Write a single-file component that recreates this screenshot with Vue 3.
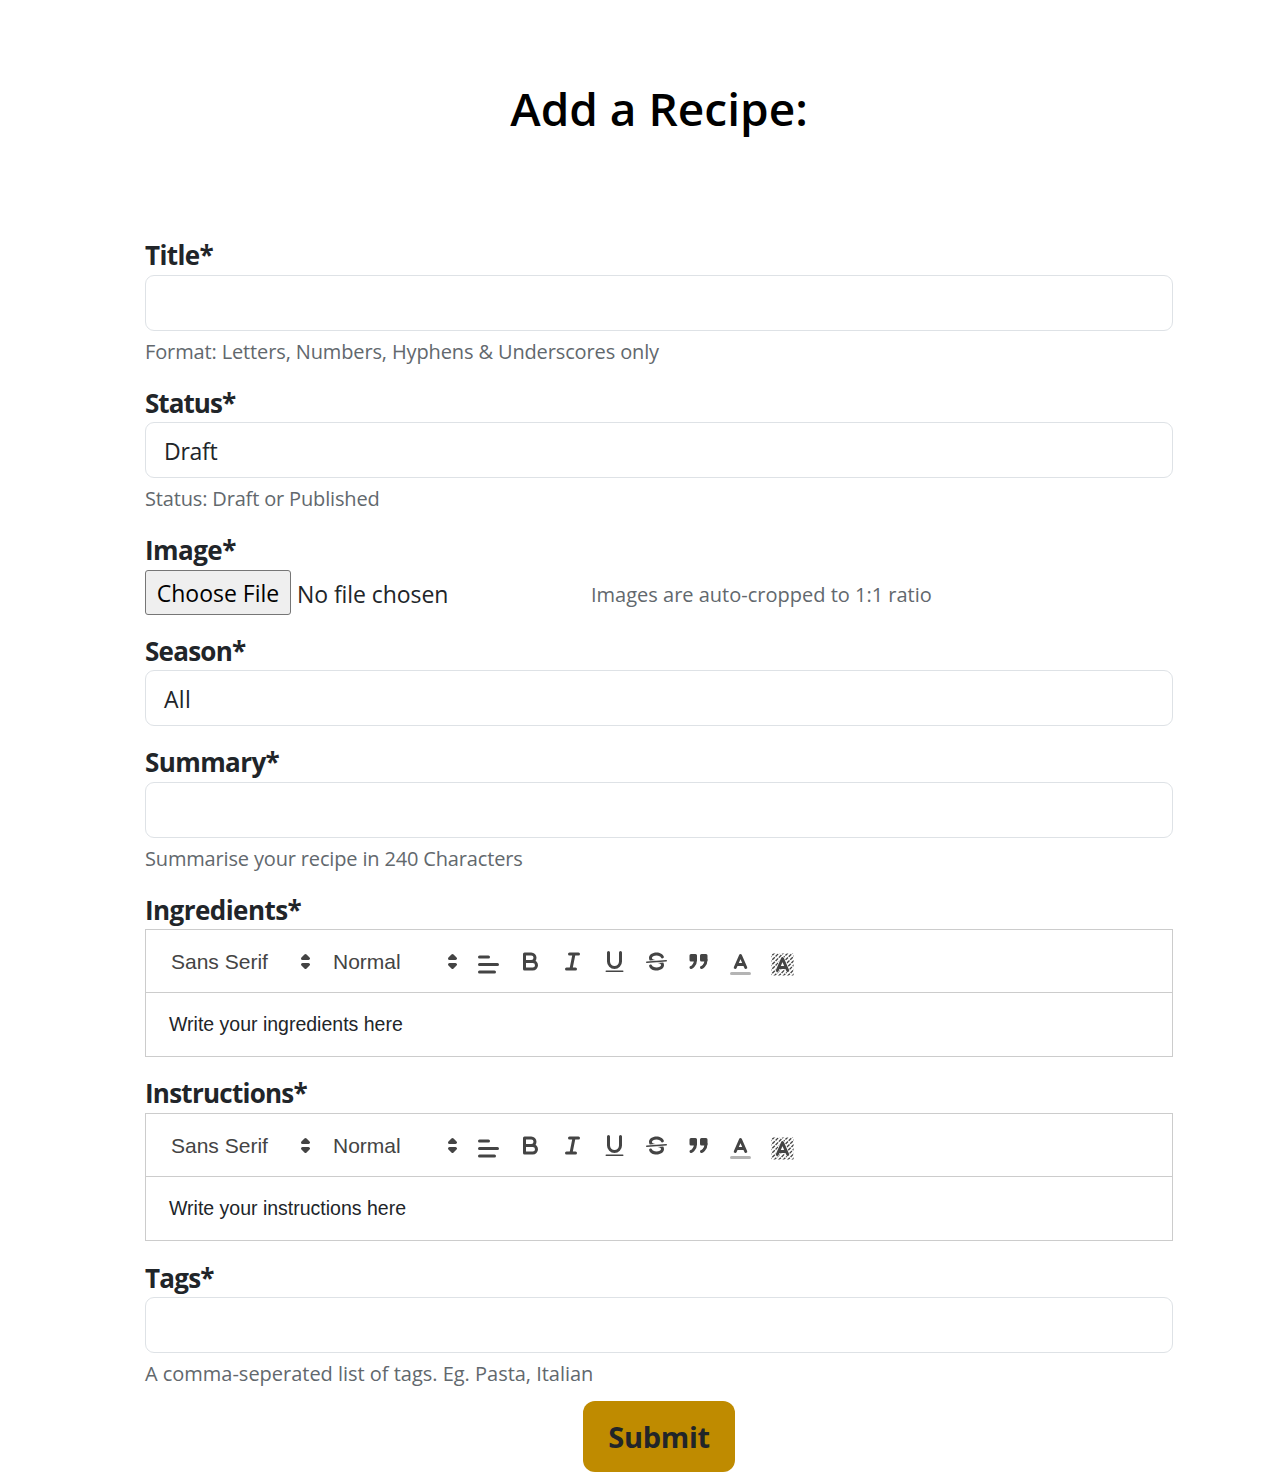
<script setup>
const editors = {
  ingredients: 'Write your ingredients here',
  instructions: 'Write your instructions here',
}
const fields = [
  { id: 'title', label: 'Title*', type: 'input', help: 'Format: Letters, Numbers, Hyphens & Underscores only', h: 147 },
  { id: 'status', label: 'Status*', type: 'input', value: 'Draft', help: 'Status: Draft or Published', h: 148 },
  { id: 'image', label: 'Image*', type: 'file', help: 'Images are auto-cropped to 1:1 ratio', h: 100 },
  { id: 'season', label: 'Season*', type: 'input', value: 'All', h: 112 },
  { id: 'summary', label: 'Summary*', type: 'input', help: 'Summarise your recipe in 240 Characters', h: 147 },
  { id: 'ingredients', label: 'Ingredients*', type: 'editor', h: 184 },
  { id: 'instructions', label: 'Instructions*', type: 'editor', h: 184 },
  { id: 'tags', label: 'Tags*', type: 'input', help: 'A comma-seperated list of tags. Eg. Pasta, Italian', h: 140 },
]
</script>

<template>
  <main class="page">
    <h1><span>Add a Recipe:</span></h1>
    <form class="form" @submit.prevent>
      <section v-for="f in fields" :key="f.id" class="field" :style="{ height: f.h + 'px' }">
        <label class="label" :class="'l-' + f.id">{{ f.label }}</label>

        <template v-if="f.type === 'input'">
          <div class="control" :class="'c-' + f.id"><span>{{ f.value }}</span></div>
          <div v-if="f.help" class="help" :class="'h-' + f.id">{{ f.help }}</div>
        </template>

        <div v-else-if="f.type === 'file'" class="file-row">
          <button type="button" class="choose">Choose File</button>
          <span class="chosen">No file chosen</span>
          <span class="file-help">{{ f.help }}</span>
        </div>

        <div v-else class="editor">
          <div class="toolbar">
            <div class="picker font">
              <span>Sans Serif</span>
              <svg viewBox="0 0 18 18"><polygon class="solid" points="7 11 9 13 11 11 7 11" /><polygon class="solid" points="7 7 9 5 11 7 7 7" /></svg>
            </div>
            <div class="picker size">
              <span>Normal</span>
              <svg viewBox="0 0 18 18"><polygon class="solid" points="7 11 9 13 11 11 7 11" /><polygon class="solid" points="7 7 9 5 11 7 7 7" /></svg>
            </div>
            <div class="tool low align">
              <svg viewBox="0 0 18 18"><path d="M3,9H15M3,14H13M3,4H9" /></svg>
            </div>
            <div class="tool">
              <svg viewBox="0 0 18 18"><path d="M5,4H9.5A2.5,2.5,0,0,1,9.5,9H5Z" /><path d="M5,9h5.5A2.5,2.5,0,0,1,10.5,14H5Z" /></svg>
            </div>
            <div class="tool">
              <svg viewBox="0 0 18 18"><path d="M7,4H13M5,14H11M8,14L10,4" /></svg>
            </div>
            <div class="tool">
              <svg viewBox="0 0 18 18"><path d="M5,3V9a4.012,4.012,0,0,0,4,4H9a4.012,4.012,0,0,0,4-4V3" /><rect class="fill" x="3" y="15" width="12" height="1" rx=".5" /></svg>
            </div>
            <div class="tool">
              <svg viewBox="0 0 18 18"><path class="thin" d="M15.5,8.5L2.5,9.5" /><path class="fill" d="M9.007,8C6.542,7.791,6,7.519,6,6.5,6,5.792,7.283,5,9,5c1.571,0,2.765.679,2.969,1.309a1,1,0,0,0,1.9-.617C13.356,4.106,11.354,3,9,3,6.2,3,4,4.538,4,6.5a3.2,3.2,0,0,0,.5,1.843Z" /><path class="fill" d="M8.984,10C11.457,10.208,12,10.479,12,11.5c0,.708-1.283,1.5-3,1.5-1.571,0-2.765-.679-2.969-1.309a1,1,0,1,0-1.9.617C4.644,13.894,6.646,15,9,15c2.8,0,5-1.538,5-3.5a3.2,3.2,0,0,0-.5-1.843Z" /></svg>
            </div>
            <div class="tool">
              <svg viewBox="0 0 18 18"><rect class="solid" x="4" y="5" width="3" height="3" /><rect class="solid" x="11" y="5" width="3" height="3" /><path class="solid" d="M7,8c0,4.031-3,5-3,5" /><path class="solid" d="M14,8c0,4.031-3,5-3,5" /></svg>
            </div>
            <div class="tool low">
              <svg viewBox="0 0 18 18"><path class="faded" d="M3,15H15" /><path d="M5.5,11L9,3L12.5,11M11.63,9H6.38" /></svg>
            </div>
            <div class="tool low">
              <svg viewBox="0 0 18 18">
                <defs>
                  <clipPath :id="f.id + '-box'"><rect x="1.6" y="1.6" width="14.8" height="14.8" /></clipPath>
                </defs>
                <g :clip-path="`url(#${f.id}-box)`">
                  <path class="hatch" d="M0,5L5,0M0,8L8,0M0,11L11,0M0,14L14,0M0,17L17,0M1,19L19,1M4,19L19,4M7,19L19,7M10,19L19,10M13,19L19,13" />
                </g>
                <path class="halo" d="M5.5,13L9,5L12.5,13M11.63,11H6.38" />
                <path d="M5.5,13L9,5L12.5,13M11.63,11H6.38" />
              </svg>
            </div>
          </div>
          <div class="content"><span>{{ editors[f.id] }}</span></div>
        </div>
      </section>
      <button class="submit">Submit</button>
    </form>
  </main>
</template>

<style>
body { background: #fff; }
</style>

<style scoped>
.page {
  box-sizing: border-box;
  width: 1272px;
  height: 1479px;
  overflow: hidden;
  padding: 73px 99px 0 145px;
  font-family: "Open Sans", "Noto Sans", sans-serif;
  font-size: 23px;
  color: #212529;
}
h1 {
  margin: 0 0 94px;
  height: 72px;
  line-height: 70px;
  text-align: center;
  font-size: 46px;
  font-weight: 600;
  color: #000;
}
.form { display: flex; flex-direction: column; }
.field { flex: none; }
.label {
  display: block;
  height: 36px;
  line-height: 34px;
  font-size: 26px;
  font-weight: 700;
  letter-spacing: -.6px;
}
.l-title, .l-image, .l-summary, .l-instructions { line-height: 32px; }
.l-status { letter-spacing: -.95px; }
.l-season, .l-instructions, .l-tags { letter-spacing: -.75px; }
.l-ingredients, .l-image { letter-spacing: -.55px; }
.control {
  box-sizing: border-box;
  height: 56px;
  padding-left: 18px;
  border: 1px solid #dee2e6;
  border-radius: 9px;
  line-height: 57px;
}
.c-status { letter-spacing: -.3px; }
.c-season { letter-spacing: .3px; }
.help, .file-help { font-size: 20px; color: #62686d; }
.help { margin-top: 6px; line-height: 30px; white-space: nowrap; }
.h-title { letter-spacing: -.13px; }
.h-status, .h-summary { letter-spacing: -.16px; }
.h-tags { letter-spacing: -.02px; }
.file-row { display: flex; align-items: center; height: 45px; white-space: nowrap; }
.choose {
  box-sizing: border-box;
  width: 146px;
  height: 45px;
  padding: 0;
  border: 1px solid #767676;
  border-radius: 3px;
  background: #efefef;
  font: inherit;
  color: #000;
}
.chosen { width: 294px; margin-left: 6px; padding-top: 3px; letter-spacing: -.07px; }
.file-help { padding-top: 3px; }
.editor {
  box-sizing: border-box;
  height: 128px;
  border: 1px solid #ccc;
  font-family: "Liberation Sans", Arial, sans-serif;
}
.toolbar {
  display: flex;
  align-items: center;
  box-sizing: border-box;
  height: 63px;
  padding-left: 25px;
  border-bottom: 1px solid #ccc;
  color: #444;
  font-size: 21px;
}
.picker { display: flex; align-items: center; justify-content: space-between; height: 27px; }
.picker span { padding-top: 2px; }
.picker.font { width: 148px; }
.picker.size { width: 133px; margin-left: 14px; }
.tool { display: flex; justify-content: center; width: 42px; height: 27px; }
.low { padding-top: 6px; }
.align { margin-left: 1px; }
svg { flex: none; width: 27px; height: 27px; fill: none; stroke: #444; stroke-width: 2; stroke-linecap: round; stroke-linejoin: round; }
.solid { fill: #444; }
.fill { fill: #444; stroke: none; }
.thin { stroke-width: 1; }
.faded { opacity: .4; }
.hatch { stroke-width: .9; stroke-dasharray: 2.4 .7; stroke-linecap: butt; }
.halo { stroke: #fff; stroke-width: 2.8; }
.content { padding-left: 23px; line-height: 62px; font-size: 19.5px; }
.submit {
  align-self: center;
  width: 152px;
  height: 71px;
  padding: 0;
  border: 0;
  border-radius: 12px;
  background: #bf8b00;
  font: 700 29px "Open Sans", "Noto Sans", sans-serif;
  letter-spacing: -.3px;
  color: #212529;
}
</style>
